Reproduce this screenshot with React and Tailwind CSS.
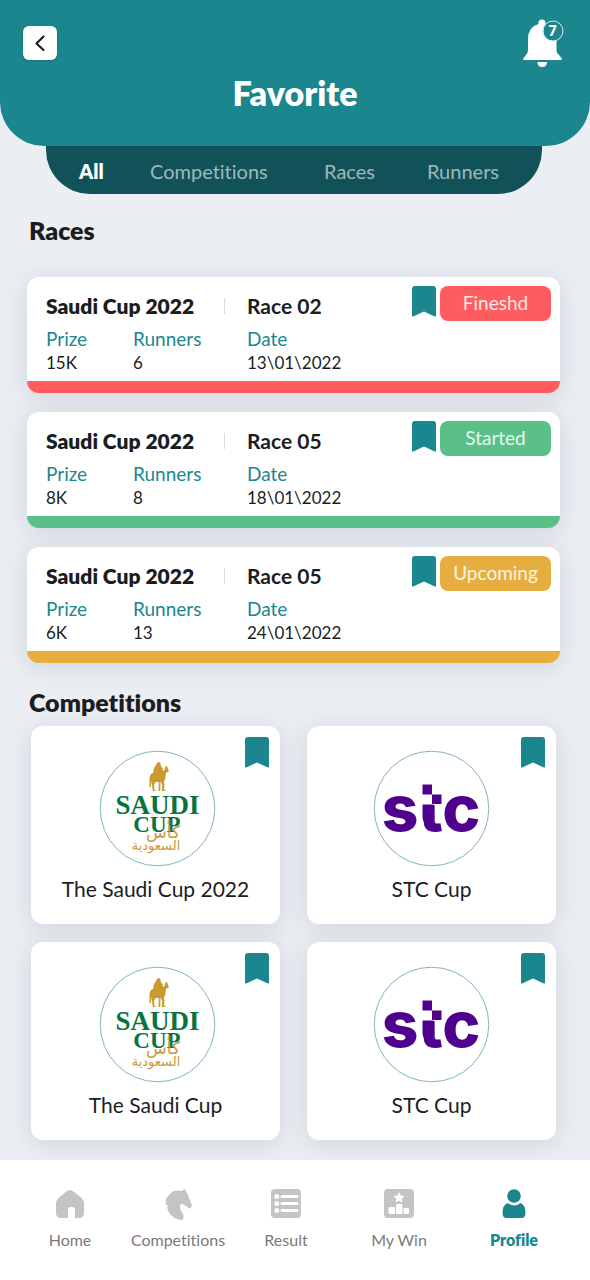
import React from "react";

const races = [
  { cup: "Saudi Cup 2022", race: "Race 02", prize: "15K", runners: "6", date: "13\\01\\2022", status: "Fineshd", badge: "bg-[#ff5c5f]", edge: "border-[#ff5c5f]" },
  { cup: "Saudi Cup 2022", race: "Race 05", prize: "8K", runners: "8", date: "18\\01\\2022", status: "Started", badge: "bg-[#5bc087]", edge: "border-[#5bc087]" },
  { cup: "Saudi Cup 2022", race: "Race 05", prize: "6K", runners: "13", date: "24\\01\\2022", status: "Upcoming", badge: "bg-[#e6ae3e]", edge: "border-[#e6ae3e]" },
];

const competitions = [
  { name: "The Saudi Cup 2022", Logo: SaudiCupLogo },
  { name: "STC Cup", Logo: StcLogo },
  { name: "The Saudi Cup", Logo: SaudiCupLogo },
  { name: "STC Cup", Logo: StcLogo },
];

const tabs = ["All", "Competitions", "Races", "Runners"];

const navItems = [
  { label: "Home", Icon: HomeIcon },
  { label: "Competitions", Icon: HorseIcon },
  { label: "Result", Icon: ListIcon },
  { label: "My Win", Icon: PodiumIcon },
  { label: "Profile", Icon: PersonIcon, active: true },
];

function BookmarkButton({ label }) {
  return (
    <button type="button" aria-label={label} aria-pressed="true" className="block shrink-0 text-[#1b868e]">
      <svg width="24" height="31" viewBox="0 0 24 31" fill="currentColor" aria-hidden="true">
        <path d="M3 0H21Q24 0 24 3V29.600Q24 31 22.800 30.400L12 25.500L1.200 30.400Q0 31 0 29.600V3Q0 0 3 0Z" />
      </svg>
    </button>
  );
}

function BellIcon() {
  return (
    <svg width="42" height="50" viewBox="0 0 42 50" aria-hidden="true">
      <path
        d="M16.500 4Q17 1.500 20 1.500T23.500 4V6Q34.500 9 34.500 21V33Q34.500 35 37 37L39.500 40Q40.500 42 38.500 42H2.500Q0.500 42 1.500 40L4 37Q6 35 6 32V21Q6 9 16.500 6Z"
        fill="#fff"
      />
      <path d="M15.500 44H25Q25 49 20.200 49T15.500 44Z" fill="#fff" />
      <circle cx="31" cy="13" r="10" fill="#1b868e" stroke="#d9eced" strokeWidth="1" />
      <text x="30.500" y="17.800" textAnchor="middle" fontSize="14" fontWeight="800" fill="#fff" className="font-['Lato',sans-serif]">7</text>
    </svg>
  );
}

function SaudiCupLogo() {
  return (
    <svg width="121" height="117" viewBox="-4 0 121 117" role="img" aria-label="Saudi Cup logo">
      <circle cx="58.500" cy="58.500" r="57.300" fill="#fff" stroke="#7db6b8" strokeWidth="1" />
      <path
        d="M57.500 14Q59 11 61 12.500Q62 14 61.500 15.500L63.500 18L64 21L65.500 20L66 17.500L67.500 15.500L68.500 17.500L69.800 21L68.500 22.500L67 22.500L66.500 27Q66.500 30 64.800 31.500L65.500 34L64.800 39.500H66.200V41H62.800L63.200 35L62 32H57L55 34.500L55.500 39.500L56.500 41H53.800L53 34L52.700 31L51.800 37H50.500L50.500 29Q50.500 24 54 23L55 18Z"
        fill="#c99b2e"
      />
      <path d="M60 31H61.500L61.200 41H59.500Z" fill="#c99b2e" />
      <g fill="#08733f" className="font-['Liberation_Serif',serif]">
        <text x="58.500" y="64" textAnchor="middle" fontSize="27" fontWeight="700">SAUDI</text>
        <text x="58" y="82" textAnchor="middle" fontSize="23" fontWeight="700">CUP</text>
      </g>
      <g fill="#cc9a3a" className="font-['DejaVu_Sans',sans-serif]" direction="rtl">
        <text x="64" y="88" textAnchor="middle" fontSize="17">كأس</text>
        <text x="57" y="100" textAnchor="middle" fontSize="13">السعودية</text>
      </g>
    </svg>
  );
}

function StcLogo() {
  return (
    <svg width="117" height="117" viewBox="0 0 117 117" role="img" aria-label="STC logo">
      <circle cx="58.500" cy="58.500" r="57.300" fill="#fff" stroke="#7db6b8" strokeWidth="1" />
      <text x="58" y="81" textAnchor="middle" fontSize="64" fontWeight="800" fill="#4f008c" className="font-['Inter',sans-serif]">stc</text>
      <path d="M45 32H69V55H45Z" fill="#fff" />
      <path d="M49.500 34.500H59V44.500H49.500ZM59 44.500H68.500V54H59ZM49.500 54.500H60V72H51Q49.500 70 49.500 67Z" fill="#4f008c" />
    </svg>
  );
}

function HomeIcon() {
  return (
    <svg width="30" height="30" viewBox="0 0 30 30" fill="currentColor" aria-hidden="true">
      <path d="M11.500 2.500Q15 -0.500 18.500 2.500L26 8.500Q29 11 29 14V24Q29 29 24 29H20V21Q20 18 17.500 18H15.500Q13 18 13 21V29H6Q1 29 1 24V14Q1 11 4 8.500Z" />
    </svg>
  );
}

function HorseIcon() {
  return (
    <svg width="30" height="32" viewBox="0 0 30 32" fill="currentColor" aria-hidden="true">
      <path d="M21.500 0.500L23.500 4.500Q25.500 7 26 10L28.800 17Q29 19.500 27 20.500Q25.500 21 24.500 19L22 17.500Q20.500 17.500 19.500 15.500Q16.500 16 17 20Q17.500 23 19.800 25Q21.500 28 20 32Q11 31.500 6.500 25.500Q3.500 21 4.500 16.500L1.800 16.500L3.500 13.500L2.500 13Q3.500 8 8 5.500L7.500 5Q12 1.500 19 3Z" />
    </svg>
  );
}

function ListIcon() {
  return (
    <svg width="30" height="30" viewBox="0 0 30 30" aria-hidden="true">
      <rect x="0" y="0" width="30" height="29" rx="4" fill="currentColor" />
      <g fill="#fff">
        <circle cx="5.800" cy="7.500" r="2.500" />
        <circle cx="5.800" cy="14.500" r="2.500" />
        <circle cx="5.800" cy="21.500" r="2.500" />
        <rect x="9.500" y="6" width="18" height="3" rx="1.500" />
        <rect x="9.500" y="13" width="18" height="3" rx="1.500" />
        <rect x="9.500" y="20" width="18" height="3" rx="1.500" />
      </g>
    </svg>
  );
}

function PodiumIcon() {
  return (
    <svg width="30" height="30" viewBox="0 0 30 30" aria-hidden="true">
      <rect x="0" y="0" width="30" height="29" rx="4" fill="currentColor" />
      <g fill="#fff">
        <path d="M15 3L16.800 6.500L20.500 7L17.800 9.700L18.500 13.500L15 11.700L11.500 13.500L12.200 9.700L9.500 7L13.200 6.500Z" />
        <rect x="4.500" y="18" width="6.500" height="7" rx="1" />
        <rect x="12" y="15" width="6.500" height="10" rx="1" />
        <rect x="19.500" y="19" width="5.500" height="6" rx="1" />
      </g>
    </svg>
  );
}

function PersonIcon() {
  return (
    <svg width="30" height="30" viewBox="0 0 30 30" fill="currentColor" aria-hidden="true">
      <circle cx="15" cy="7" r="6.800" />
      <path d="M8.500 14Q15 19 21.500 14Q26.500 16 26.500 24Q26.500 29 22.500 29H7.500Q3.500 29 3.500 24Q3.500 16 8.500 14Z" />
    </svg>
  );
}

function RaceCard({ item }) {
  return (
    <article className={`flex h-[116px] items-start justify-between rounded-[12px] border-b-[12px] bg-white pl-[19px] pr-[9px] shadow-[0_4px_24px_rgba(90,100,120,0.18)] ${item.edge}`}>
      <div className="grid grid-cols-[87px_114px_auto] pt-[17px]">
        <h3 className="col-span-2 flex items-center justify-between pr-[22px] text-[21px] leading-[24px] font-extrabold">
          {item.cup}
          <span className="h-4 w-px bg-[#d8dade]" />
        </h3>
        <p className="text-[21px] leading-[24px] font-bold">{item.race}</p>
        <dl className="col-span-3 grid grid-cols-subgrid pt-[9px] leading-[24px]">
          <div><dt className="text-[19px] text-[#1b868e]">Prize</dt><dd className="text-[17px]">{item.prize}</dd></div>
          <div><dt className="text-[19px] text-[#1b868e]">Runners</dt><dd className="text-[17px]">{item.runners}</dd></div>
          <div><dt className="text-[19px] text-[#1b868e]">Date</dt><dd className="text-[17px]">{item.date}</dd></div>
        </dl>
      </div>
      <div className="flex items-start gap-1 pt-[9px]">
        <BookmarkButton label={`Remove ${item.cup} ${item.race} from favorites`} />
        <span className={`flex h-[35px] w-[111px] items-center justify-center rounded-[8px] text-[19px] text-white/85 ${item.badge}`}>{item.status}</span>
      </div>
    </article>
  );
}

export default function App() {
  return (
    <div className="flex min-h-screen flex-col bg-[#ebeef3] font-['Lato',sans-serif] text-[#1b1d1f] [font-variant-ligatures:none]">
      <header>
        <div className="rounded-b-[44px] bg-[#1b868e] pb-[32px] pt-[18px]">
          <div className="flex items-center justify-between pl-[23px] pr-[26px]">
            <button type="button" aria-label="Back" className="flex size-[34px] items-center justify-center rounded-[6px] bg-white shadow-sm">
              <svg width="12" height="18" viewBox="0 0 12 18" fill="none" stroke="#1b1d1f" strokeWidth="2.200" strokeLinecap="round" strokeLinejoin="round" aria-hidden="true">
                <path d="M9.500 2.500L2.500 9.500L9.500 16" />
              </svg>
            </button>
            <button type="button" aria-label="7 notifications">
              <BellIcon />
            </button>
          </div>
          <h1 className="pt-[4px] text-center text-[34px] leading-[42px] font-extrabold text-white">Favorite</h1>
        </div>
        <nav aria-label="Favorite filters" className="ml-[46px] mr-[48px] grid h-[48px] grid-cols-[71fr_174fr_103fr_115fr] items-center rounded-b-[44px] bg-[#115158] pl-[33px] pt-[2px]">
          {tabs.map((tab) => (
            <button key={tab} type="button" className={tab === "All" ? "text-left text-[20px] leading-[24px] font-extrabold text-white" : "text-left text-[20px] leading-[24px] text-white/60"}>
              {tab}
            </button>
          ))}
        </nav>
      </header>

      <main className="flex-1 pb-5">
        <section className="pl-[27px] pr-[30px] pt-[21px]">
          <h2 className="pl-[2px] text-[25px] leading-[30px] font-extrabold">Races</h2>
          <div className="flex flex-col gap-[19px] pt-[32px]">
            {races.map((item) => (
              <RaceCard key={item.date} item={item} />
            ))}
          </div>
        </section>

        <section className="pl-[29px] pr-[34px] pt-[24px]">
          <h2 className="text-[25px] leading-[30px] font-extrabold">Competitions</h2>
          <div className="grid grid-cols-2 gap-x-[27px] gap-y-[18px] pl-[2px] pt-[9px]">
            {competitions.map(({ name, Logo }, i) => (
              <article key={i} className="relative flex h-[198px] flex-col items-center rounded-[12px] bg-white pt-[24px] shadow-[0_4px_24px_rgba(90,100,120,0.18)]">
                <Logo />
                <h3 className="pt-[9px] text-[21px] leading-[26px]">{name}</h3>
                <div className="absolute right-[11px] top-[11px]">
                  <BookmarkButton label={`Remove ${name} from favorites`} />
                </div>
              </article>
            ))}
          </div>
        </section>
      </main>

      <nav aria-label="Main" className="relative grid h-[120px] grid-cols-[108fr_108fr_108fr_118fr_112fr] bg-white pl-[16px] pr-[20px] pt-[29px]">
        {navItems.map(({ label, Icon, active }) => (
          <a key={label} href="#" className={`flex flex-col items-center gap-[9px] ${active ? "text-[#1b868e]" : "text-[#c4c4c4]"}`}>
            <span className="flex h-[30px] items-center"><Icon /></span>
            <span className={active ? "text-[16px] leading-[24px] font-extrabold" : "text-[16px] leading-[24px] text-[#7a7a7a]"}>{label}</span>
          </a>
        ))}
      </nav>
    </div>
  );
}
